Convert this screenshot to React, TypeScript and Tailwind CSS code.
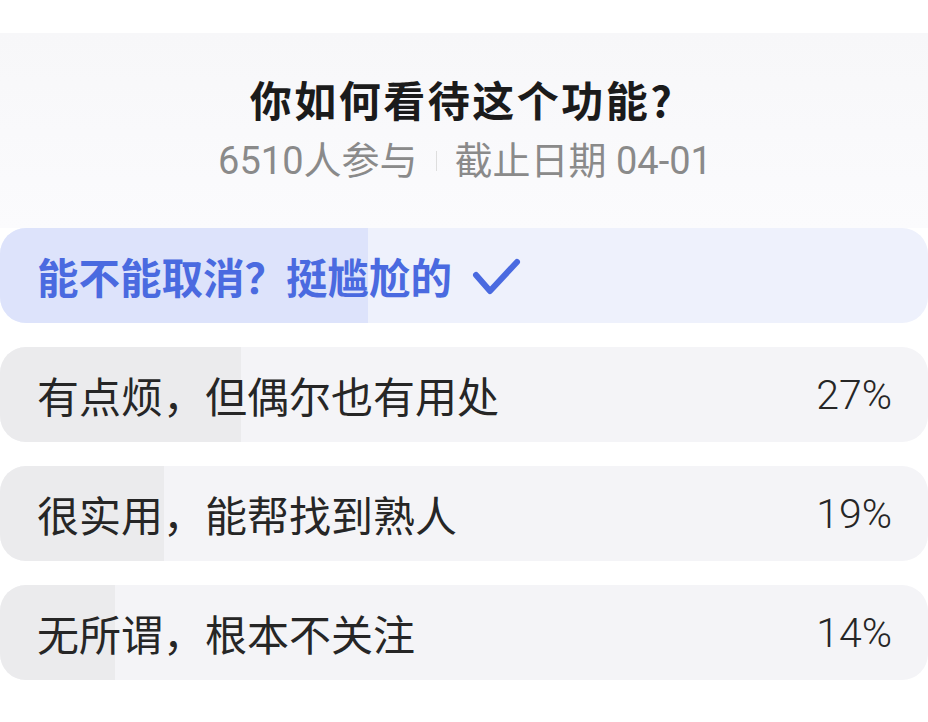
import React from "react";

const rows = [
  { label: "有点烦，但偶尔也有用处", pct: "27%", fill: "w-[241px]" },
  { label: "很实用，能帮找到熟人", pct: "19%", fill: "w-[164px]" },
  { label: "无所谓，根本不关注", pct: "14%", fill: "w-[115px]" },
];

const cjk = { fontFamily: '"Noto Sans CJK SC", "Noto Sans", sans-serif' };
const mixed = { fontFamily: 'Roboto, "Noto Sans CJK SC", sans-serif' };

export default function App() {
  return (
    <div className="w-[928px] h-[722px] bg-white overflow-hidden flex flex-col" style={cjk}>
      <div className="h-[33px] shrink-0 bg-white" />
      <div className="shrink-0 h-[195px] bg-gradient-to-b from-[#f7f7f9] to-[#fbfbfd] flex flex-col items-center pt-[40px]">
        <div className="text-[42px] leading-[52px] font-bold text-[#1b1b1b] tracking-[2.5px] pr-[4px]">
          你如何看待这个功能?
        </div>
        <div className="mt-[14px] flex items-center text-[38px] leading-[44px] text-[#8a8a8a] pl-[2px]" style={mixed}>
          <span>6510人参与</span>
          <span className="mx-[18px] w-px h-[20px] bg-[#dedede]" />
          <span>截止日期 04-01</span>
        </div>
      </div>
      <div className="flex flex-col gap-[24px]">
        <div className="relative h-[95px] rounded-[26px] bg-[#eef1fc] overflow-hidden flex items-center">
          <div className="absolute left-0 top-0 bottom-0 w-[368px] bg-[#dde3fb]" />
          <div className="relative flex items-center pl-[37px]">
            <span className="text-[41.5px] leading-[50px] font-bold text-[#4a6ae0]">能不能取消？挺尴尬的</span>
            <svg className="ml-[18px]" width="52" height="42" viewBox="0 0 52 42" fill="none">
              <path d="M6 20 L20 36 L47 7" stroke="#4a6ae0" strokeWidth="6" strokeLinecap="round" strokeLinejoin="round" />
            </svg>
          </div>
        </div>
        {rows.map((r) => (
          <div key={r.label} className="relative h-[95px] rounded-[26px] bg-[#f4f4f7] overflow-hidden flex items-center">
            <div className={`absolute left-0 top-0 bottom-0 ${r.fill} bg-[#ebebed]`} />
            <div className="relative flex-1 flex items-center justify-between pl-[37px] pr-[36px]">
              <span className="text-[42px] leading-[50px] text-[#262626]">{r.label}</span>
              <span className="text-[41px] leading-[50px] font-light text-[#262626]" style={mixed}>{r.pct}</span>
            </div>
          </div>
        ))}
      </div>
    </div>
  );
}
